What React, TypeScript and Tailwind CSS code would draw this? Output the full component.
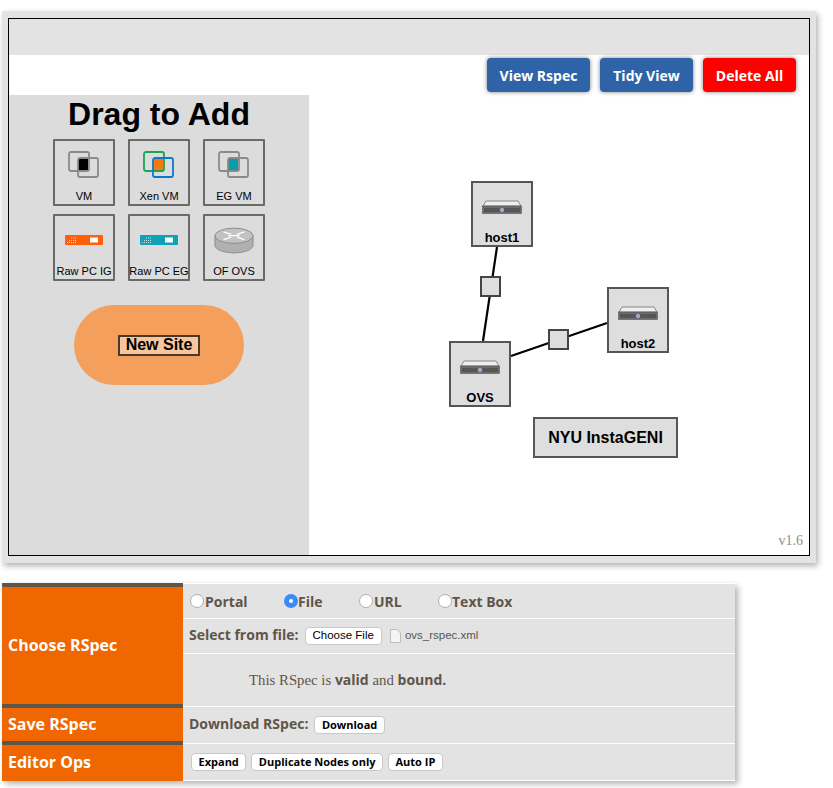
import type { ReactNode } from "react";

function VmIcon({ a, b, fill }: { a: string; b: string; fill: string }) {
  return (
    <svg width="32" height="28" viewBox="0 0 32 28" fill="none">
      <rect x="10" y="7" width="10" height="12" fill={fill} />
      <rect x="1" y="1" width="20" height="19" rx="2" stroke={a} strokeWidth="1.8" />
      <rect x="10" y="7" width="20" height="19" rx="2" stroke={b} strokeWidth="1.8" />
    </svg>
  );
}

function RawPcIcon({ color }: { color: string }) {
  return (
    <svg width="38" height="10" viewBox="0 0 38 10">
      <rect width="38" height="10" rx="1" fill={color} />
      <rect x="25" y="2.5" width="8" height="5" fill="#fff" />
      <path d="M2 7.5h9M4 5.5h8M6 3h5" stroke="#fff" strokeOpacity="0.7" strokeWidth="1" strokeDasharray="1 1" />
    </svg>
  );
}

function RouterIcon() {
  return (
    <svg width="40" height="27" viewBox="0 0 42 28">
      <path d="M1 9v10c0 4.500 9 8 20 8s20-3.500 20-8V9z" fill="#b0b0b0" stroke="#8c8c8c" />
      <ellipse cx="21" cy="9" rx="20" ry="8" fill="#c2c2c2" stroke="#8c8c8c" />
      <path d="M10 5l8 2.500M10 13l8-2.500M32 5l-8 2.500M32 13l-8-2.500M15 9h12" stroke="#fff" strokeWidth="1.300" />
    </svg>
  );
}

function ServerIcon() {
  return (
    <svg width="40" height="14" viewBox="0 0 40 14">
      <path d="M1 6 L4 1 H36 L39 6z" fill="#eeeeee" stroke="#707070" strokeWidth="0.8" />
      <rect x="0.500" y="6" width="39" height="7.500" fill="#6c6c6c" stroke="#555" strokeWidth="0.6" />
      <rect x="2" y="8" width="36" height="4" fill="#565656" />
      <circle cx="20" cy="10" r="1.800" fill="#a79be0" stroke="#ddd" strokeWidth="0.5" />
    </svg>
  );
}

function Tile({ label, children }: { label: string; children: ReactNode }) {
  return (
    <div className="flex h-[67px] w-[62px] flex-col items-center rounded-[1px] border-2 border-[#6a6a6a]">
      <div className="flex h-[48px] w-full items-center justify-center">{children}</div>
      <div className="whitespace-nowrap text-[11px] leading-[14px] text-black">{label}</div>
    </div>
  );
}

function GraphNode({ label, className }: { label: string; className: string }) {
  return (
    <div
      className={`absolute flex h-[66px] w-[62px] flex-col items-center border-2 border-[#555] bg-[#dedede] pt-[17px] ${className}`}
    >
      <ServerIcon />
      <div className="mt-[16px] text-[13px] font-bold leading-[15px] text-black">{label}</div>
    </div>
  );
}

function ToolButton({ label, className }: { label: string; className: string }) {
  return (
    <button
      className={`flex h-[34px] items-center justify-center rounded-[4px] text-[14px] font-bold text-white shadow-[0_0_4px_rgba(0,0,0,0.5)] ${className}`}
    >
      {label}
    </button>
  );
}

function Radio({
  label,
  checked,
  className,
  labelClass = "",
}: {
  label: string;
  checked?: boolean;
  className: string;
  labelClass?: string;
}) {
  return (
    <div className={`flex items-center ${className}`}>
      {checked ? (
        <span className="flex h-[14px] w-[14px] items-center justify-center rounded-full bg-[#3b8bf7]">
          <span className="h-[4px] w-[4px] rounded-full bg-white" />
        </span>
      ) : (
        <span className="h-[14px] w-[14px] rounded-full border border-[#b0b0b0] bg-white" />
      )}
      <span className={`text-[14px] font-bold text-[#5f5549] ${labelClass}`}>{label}</span>
    </div>
  );
}

function SmallButton({ label, className = "px-[6.5px] font-bold text-[11px]" }: { label: string; className?: string }) {
  return (
    <button
      className={`flex h-[18px] items-center rounded-[4px] border border-[#c8c8c8] bg-white text-black ${className}`}
    >
      {label}
    </button>
  );
}

function SideCell({ label, className }: { label: string; className: string }) {
  return (
    <div
      className={`flex items-center border-t-4 border-[#5f5549] bg-[#f06600] pb-[2px] pl-[6px] text-[16px] font-bold text-white ${className}`}
    >
      {label}
    </div>
  );
}

export default function App() {
  return (
    <div className="h-[788px] w-[833px] overflow-hidden bg-white pl-[2px] pt-[11px] font-['Open_Sans',sans-serif]">
      <div className="h-[552px] w-[814px] bg-[#e3e3e3] px-[6px] pt-[7px] shadow-[2px_3px_6px_rgba(0,0,0,0.3)]">
        <div className="flex h-[538px] w-[802px] flex-col border border-black bg-white">
          <div className="h-[36px] bg-[#e3e3e3]" />
          <div className="flex h-[40px] items-center justify-end gap-[10px] pr-[13px]">
            <ToolButton label="View Rspec" className="w-[103px] bg-[#2f63a8]" />
            <ToolButton label="Tidy View" className="w-[93px] bg-[#2f63a8]" />
            <ToolButton label="Delete All" className="w-[93px] bg-[#ff0000]" />
          </div>
          <div className="flex flex-1 font-['Liberation_Sans',sans-serif]">
            <div className="flex w-[300px] flex-col items-center bg-[#dcdcdc]">
              <h1 className="mt-[1px] text-[32px] font-bold leading-[36px] text-black">Drag to Add</h1>
              <div className="mt-[7px] grid grid-cols-[62px_62px_62px] gap-x-[13px] gap-y-[8px]">
                <Tile label="VM">
                  <VmIcon a="#8a8a8a" b="#8a8a8a" fill="#000" />
                </Tile>
                <Tile label="Xen VM">
                  <VmIcon a="#17a558" b="#0f78c8" fill="#f47a10" />
                </Tile>
                <Tile label="EG VM">
                  <VmIcon a="#8a8a8a" b="#8a8a8a" fill="#0a9cad" />
                </Tile>
                <Tile label="Raw PC IG">
                  <RawPcIcon color="#ff5f0a" />
                </Tile>
                <Tile label="Raw PC EG">
                  <RawPcIcon color="#0ea2b4" />
                </Tile>
                <Tile label="OF OVS">
                  <RouterIcon />
                </Tile>
              </div>
              <div className="mt-[24px] flex h-[80px] w-[170px] items-center justify-center rounded-full bg-[#f4a05c]">
                <div className="flex h-[21px] w-[82px] items-center justify-center border-2 border-[#4a3a2c] bg-[#f8c69c] text-[16px] font-bold leading-none text-black">
                  New Site
                </div>
              </div>
            </div>
            <div className="relative flex-1">
              <svg className="absolute left-0 top-0" width="500" height="460" fill="none">
                <path d="M188 152 L174 246" stroke="#000" strokeWidth="2.200" />
                <path d="M202 261 L298 228" stroke="#000" strokeWidth="2.200" />
              </svg>
              <GraphNode label="host1" className="left-[162px] top-[86px]" />
              <GraphNode label="host2" className="left-[298px] top-[192px]" />
              <GraphNode label="OVS" className="left-[140px] top-[246px]" />
              <div className="absolute left-[171px] top-[181px] h-[21px] w-[21px] border-2 border-[#444] bg-[#dedede]" />
              <div className="absolute left-[239px] top-[234px] h-[21px] w-[21px] border-2 border-[#444] bg-[#dedede]" />
              <div className="absolute left-[224px] top-[322px] flex h-[41px] w-[145px] items-center justify-center border-2 border-[#555] bg-[#dedede] text-[16px] font-bold text-black">
                NYU InstaGENI
              </div>
              <div className="absolute bottom-[6px] right-[6px] font-['Liberation_Serif',serif] text-[14px] leading-[16px] text-[#8f8f8f]">
                v1.6
              </div>
            </div>
          </div>
        </div>
      </div>

      <div className="mt-[20px] flex h-[198px] w-[733px] shadow-[3px_3px_6px_rgba(0,0,0,0.3)]">
        <div className="flex w-[181px] flex-col">
          <SideCell label="Choose RSpec" className="h-[121px]" />
          <SideCell label="Save RSpec" className="h-[37px]" />
          <SideCell label="Editor Ops" className="h-[40px]" />
        </div>
        <div className="flex flex-1 flex-col bg-[#e3e3e3] text-[#5f5549]">
          <div className="flex h-[36px] items-center border-y border-y-white pl-[7px]">
            <Radio label="Portal" className="w-[94px]" labelClass="ml-[1px]" />
            <Radio label="File" checked className="w-[75px]" />
            <Radio label="URL" className="w-[79px]" labelClass="ml-[1px]" />
            <Radio label="Text Box" className="w-[90px]" />
          </div>
          <div className="flex h-[35px] items-center border-b border-b-white pl-[6px]">
            <span className="mb-[4px] mr-[6px] text-[14px] font-bold">Select from file:</span>
            <SmallButton label="Choose File" className="px-[7px] font-['Liberation_Sans',sans-serif] text-[11.500px]" />
            <svg className="ml-[8px]" width="11" height="14" viewBox="0 0 11 14" fill="none">
              <path d="M0.500 0.500H7L10.500 4V13.500H0.500z" fill="#f4f4f4" stroke="#bdbdbd" />
            </svg>
            <span className="ml-[4px] font-['Liberation_Sans',sans-serif] text-[11.500px] text-[#555]">ovs_rspec.xml</span>
          </div>
          <div className="flex h-[53px] items-center border-b border-b-white pl-[66px] font-['Liberation_Serif',serif] text-[14.800px]">
            <span>
              This RSpec is <b className="font-['Open_Sans',sans-serif] text-[14px]">valid</b> and{" "}
              <b className="font-['Open_Sans',sans-serif] text-[14px]">bound.</b>
            </span>
          </div>
          <div className="flex h-[37px] items-center border-b border-b-white pl-[6px]">
            <span className="mb-[4px] mr-[6px] text-[14px] font-bold">Download RSpec:</span>
            <SmallButton label="Download" />
          </div>
          <div className="flex h-[37px] items-center gap-[5px] border-b border-b-white pl-[8px]">
            <SmallButton label="Expand" />
            <SmallButton label="Duplicate Nodes only" />
            <SmallButton label="Auto IP" />
          </div>
        </div>
      </div>
    </div>
  );
}
